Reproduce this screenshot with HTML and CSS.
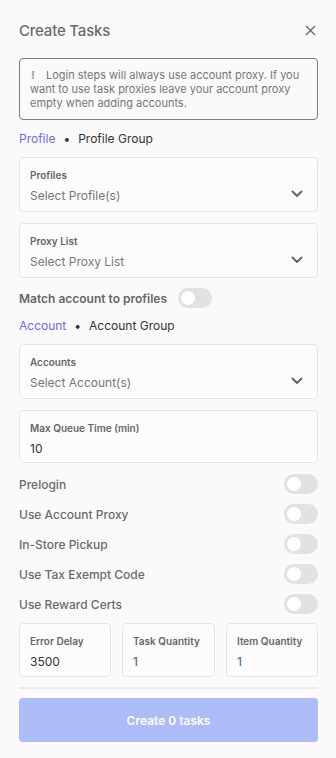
FILE: index.html
```html
<!DOCTYPE html>
<html lang="en">
<head>
    <meta charset="UTF-8">
    <meta name="viewport" content="width=device-width, initial-scale=1.0">
    <title>Create Tasks</title>
    <link rel="stylesheet" href="styles.css">
</head>
<body>
    <div class="panel">
        <!-- Header -->
        <header class="panel-head">
            <h1>Create Tasks</h1>
            <button class="close" aria-label="Close">
                <svg width="11" height="11" viewBox="0 0 11 11"><path d="M1.5 1.5L9.5 9.5M9.5 1.5L1.5 9.5" stroke="#707070" stroke-width="1.5" stroke-linecap="round"/></svg>
            </button>
        </header>

        <div class="notice">
            <span class="bang">!</span>Login steps will always use account proxy. If you want to use task proxies leave your account proxy empty when adding accounts.
        </div>

        <!-- Profile section -->
        <div class="crumbs"><span class="active">Profile</span><span class="dot">•</span><span>Profile Group</span></div>

        <div class="field select">
            <label>Profiles</label>
            <div class="value muted">Select Profile(s)</div>
            <svg class="chev" width="12" height="8" viewBox="0 0 12 8"><path d="M1.5 1.5L6 6L10.5 1.5" fill="none" stroke="#666" stroke-width="2" stroke-linecap="round" stroke-linejoin="round"/></svg>
        </div>

        <div class="field select">
            <label>Proxy List</label>
            <div class="value muted">Select Proxy List</div>
            <svg class="chev" width="12" height="8" viewBox="0 0 12 8"><path d="M1.5 1.5L6 6L10.5 1.5" fill="none" stroke="#666" stroke-width="2" stroke-linecap="round" stroke-linejoin="round"/></svg>
        </div>

        <div class="match">
            <span>Match account to profiles</span>
            <span class="toggle"></span>
        </div>

        <!-- Account section -->
        <div class="crumbs"><span class="active">Account</span><span class="dot">•</span><span>Account Group</span></div>

        <div class="field select">
            <label>Accounts</label>
            <div class="value muted">Select Account(s)</div>
            <svg class="chev" width="12" height="8" viewBox="0 0 12 8"><path d="M1.5 1.5L6 6L10.5 1.5" fill="none" stroke="#666" stroke-width="2" stroke-linecap="round" stroke-linejoin="round"/></svg>
        </div>

        <div class="field queue">
            <label>Max Queue Time (min)</label>
            <div class="value">10</div>
        </div>

        <!-- Options -->
        <div class="options">
            <div class="option"><span>Prelogin</span><span class="toggle"></span></div>
            <div class="option"><span>Use Account Proxy</span><span class="toggle"></span></div>
            <div class="option"><span>In-Store Pickup</span><span class="toggle"></span></div>
            <div class="option"><span>Use Tax Exempt Code</span><span class="toggle"></span></div>
            <div class="option"><span>Use Reward Certs</span><span class="toggle"></span></div>
        </div>

        <div class="trio">
            <div class="field">
                <label>Error Delay</label>
                <div class="value">3500</div>
            </div>
            <div class="field">
                <label>Task Quantity</label>
                <div class="value purple">1</div>
            </div>
            <div class="field">
                <label>Item Quantity</label>
                <div class="value blue">1</div>
            </div>
        </div>

        <hr class="divider">

        <button class="submit">Create 0 tasks</button>
    </div>
</body>
</html>
```

FILE: styles.css
```css
/* Reset styles */
* {
    margin: 0;
    padding: 0;
    box-sizing: border-box;
}

body {
    background-color: #fafafa;
    font-family: Inter, "Noto Sans", sans-serif;
    color: #666;
}

.panel {
    width: 336px;
    padding: 0 18px 0 19px;
}

/* Header styles */
.panel-head {
    display: flex;
    justify-content: space-between;
    align-items: center;
    height: 58px;
    padding-top: 2px;
}

.panel-head h1 {
    font-size: 15px;
    font-weight: 500;
    letter-spacing: -0.2px;
    color: #6b6b6b;
}

.close {
    border: none;
    background: none;
    width: 20px;
    height: 20px;
    display: flex;
    align-items: center;
    justify-content: center;
    margin-right: -2px;
}

.notice {
    border: 1px solid #7d7d7d;
    border-radius: 4px;
    padding: 9px 10px;
    font-size: 11px;
    line-height: 14px;
    color: #777;
}

.bang {
    display: inline-block;
    margin: 0 11px 0 1px;
    font-weight: 800;
    color: #a8a8a8;
}

/* Breadcrumbs */
.crumbs {
    display: flex;
    align-items: center;
    font-size: 12px;
    line-height: 16px;
    color: #333;
    margin: 11px 0 10px;
}

.crumbs .active {
    color: #6b6bef;
}

.crumbs .dot {
    margin: 0 8px;
    font-size: 12px;
}

/* Fields */
.field {
    position: relative;
    border: 1px solid #e6e6e6;
    border-radius: 4px;
    background-color: #fcfcfc;
    height: 55px;
    padding: 11px 10px 0;
    margin-bottom: 11px;
}

.field.queue {
    height: 53px;
}

.field label {
    display: block;
    font-size: 10px;
    font-weight: 600;
    color: #666;
    line-height: 13px;
}

.field .value {
    font-size: 12px;
    line-height: 16px;
    margin-top: 6px;
    color: #333;
}

.field .value.muted {
    color: #777;
}

.field .value.purple {
    color: #6a3d8c;
}

.field .value.blue {
    color: #2f5f93;
}

.chev {
    position: absolute;
    right: 14px;
    top: 32px;
}

.match {
    display: flex;
    align-items: center;
    gap: 11px;
    font-size: 12px;
    font-weight: 600;
    color: #666;
    margin-top: -1px;
    height: 20px;
}

.toggle {
    position: relative;
    display: inline-block;
    width: 34px;
    height: 20px;
    border-radius: 10px;
    background-color: #e2e2e2;
}

.toggle::after {
    content: "";
    position: absolute;
    left: 3px;
    top: 3px;
    width: 14px;
    height: 14px;
    border-radius: 50%;
    background-color: #fff;
}

.match + .crumbs {
    margin-top: 10px;
}

/* Options */
.options {
    margin-top: -5px;
}

.option {
    display: flex;
    justify-content: space-between;
    align-items: center;
    height: 30px;
    font-size: 12px;
    font-weight: 500;
    color: #6b6b6b;
}

.trio {
    display: grid;
    grid-template-columns: 92px 93px 92px;
    justify-content: space-between;
    margin-top: 4px;
}

.trio .field {
    height: 54px;
    margin-bottom: 0;
}

.divider {
    border: none;
    height: 2px;
    background-color: #ebebeb;
    margin: 10px 0 9px;
}

.submit {
    display: block;
    width: 100%;
    height: 44px;
    border: none;
    border-radius: 4px;
    background-color: #acbcf6;
    color: #fff;
    font-family: inherit;
    font-size: 12px;
    font-weight: 600;
}
```
